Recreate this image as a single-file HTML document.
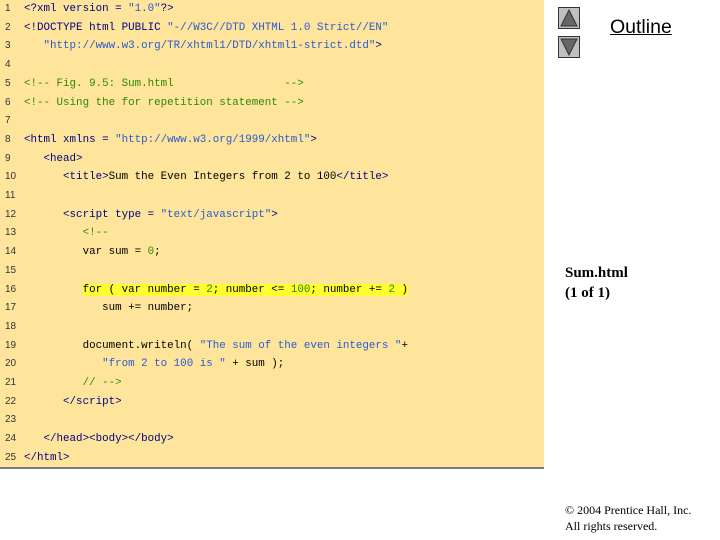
<!DOCTYPE html>
<html><head><meta charset="utf-8"><style>
body{margin:0;width:720px;height:540px;background:#fff;position:relative;overflow:hidden}
#code{position:absolute;left:0;top:0;width:544px;height:467px;background:#FFE59C;border-bottom:2px solid #7a7a80}
.l{position:absolute;left:0;height:18px;font-family:"Liberation Mono",monospace;font-size:10.85px;line-height:14px;white-space:pre;color:#000080;margin-top:2px}
.n{position:absolute;left:5px;color:#333;font-family:"Liberation Sans",sans-serif;font-size:10px}
.c{position:absolute;left:24px}
.s{color:#2a5ad0}.g{color:#2c8a00}.k{color:#000}.h{background:#ffff30}
.tri{position:absolute;left:558px;width:22px;height:22px;background:#c0c0c0;border:1px solid #333;box-sizing:border-box}
</style></head><body>
<div id="code"></div>
<div class="l" style="top:0"><span class="n">1</span><span class="c">&lt;?xml version = <span class="s">"1.0"</span>?&gt;</span></div>
<div class="l" style="top:18.7px"><span class="n">2</span><span class="c">&lt;!DOCTYPE html PUBLIC <span class="s">"-//W3C//DTD XHTML 1.0 Strict//EN"</span></span></div>
<div class="l" style="top:37.4px"><span class="n">3</span><span class="c"><span class="s">   "http://www.w3.org/TR/xhtml1/DTD/xhtml1-strict.dtd"</span>&gt;</span></div>
<div class="l" style="top:56.1px"><span class="n">4</span></div>
<div class="l" style="top:74.8px"><span class="n">5</span><span class="c g">&lt;!-- Fig. 9.5: Sum.html                 --&gt;</span></div>
<div class="l" style="top:93.5px"><span class="n">6</span><span class="c g">&lt;!-- Using the for repetition statement --&gt;</span></div>
<div class="l" style="top:112.2px"><span class="n">7</span></div>
<div class="l" style="top:130.9px"><span class="n">8</span><span class="c">&lt;html xmlns = <span class="s">"http://www.w3.org/1999/xhtml"</span>&gt;</span></div>
<div class="l" style="top:149.6px"><span class="n">9</span><span class="c">   &lt;head&gt;</span></div>
<div class="l" style="top:168.3px"><span class="n">10</span><span class="c">      &lt;title&gt;<span class="k">Sum the Even Integers from 2 to 100</span>&lt;/title&gt;</span></div>
<div class="l" style="top:187px"><span class="n">11</span></div>
<div class="l" style="top:205.7px"><span class="n">12</span><span class="c">      &lt;script type = <span class="s">"text/javascript"</span>&gt;</span></div>
<div class="l" style="top:224.4px"><span class="n">13</span><span class="c g">         &lt;!--</span></div>
<div class="l" style="top:243.1px"><span class="n">14</span><span class="c k">         var sum = <span class="g">0</span>;</span></div>
<div class="l" style="top:261.8px"><span class="n">15</span></div>
<div class="l" style="top:280.5px"><span class="n">16</span><span class="c k">         <span class="h">for ( var number = <span class="g">2</span>; number &lt;= <span class="g">100</span>; number += <span class="g">2</span> )</span></span></div>
<div class="l" style="top:299.2px"><span class="n">17</span><span class="c k">            sum += number;</span></div>
<div class="l" style="top:317.9px"><span class="n">18</span></div>
<div class="l" style="top:336.6px"><span class="n">19</span><span class="c k">         document.writeln( <span class="s">"The sum of the even integers "</span>+</span></div>
<div class="l" style="top:355.3px"><span class="n">20</span><span class="c k">            <span class="s">"from 2 to 100 is "</span> + sum );</span></div>
<div class="l" style="top:374px"><span class="n">21</span><span class="c g">         // --&gt;</span></div>
<div class="l" style="top:392.7px"><span class="n">22</span><span class="c">      &lt;/script&gt;</span></div>
<div class="l" style="top:411.4px"><span class="n">23</span></div>
<div class="l" style="top:430.1px"><span class="n">24</span><span class="c">   &lt;/head&gt;&lt;body&gt;&lt;/body&gt;</span></div>
<div class="l" style="top:448.8px"><span class="n">25</span><span class="c">&lt;/html&gt;</span></div>

<div class="tri" style="top:7px"><svg width="20" height="20" style="position:absolute;left:0;top:0"><polygon points="10,2 18,18 2,18" fill="#666" stroke="#333"/></svg></div>
<div class="tri" style="top:36px"><svg width="20" height="20" style="position:absolute;left:0;top:0"><polygon points="2,2 18,2 10,18" fill="#666" stroke="#333"/></svg></div>
<div style="position:absolute;left:610px;top:16px;font-family:'Liberation Sans',sans-serif;font-size:19.5px;text-decoration:underline">Outline</div>
<div style="position:absolute;left:565px;top:263px;font-family:'Liberation Serif',serif;font-size:15px;font-weight:bold;line-height:20px">Sum.html<br>(1 of 1)</div>
<div style="position:absolute;left:565px;top:502px;font-family:'Liberation Serif',serif;font-size:12px;line-height:16px">© 2004 Prentice Hall, Inc.<br>All rights reserved.</div>
</body></html>
